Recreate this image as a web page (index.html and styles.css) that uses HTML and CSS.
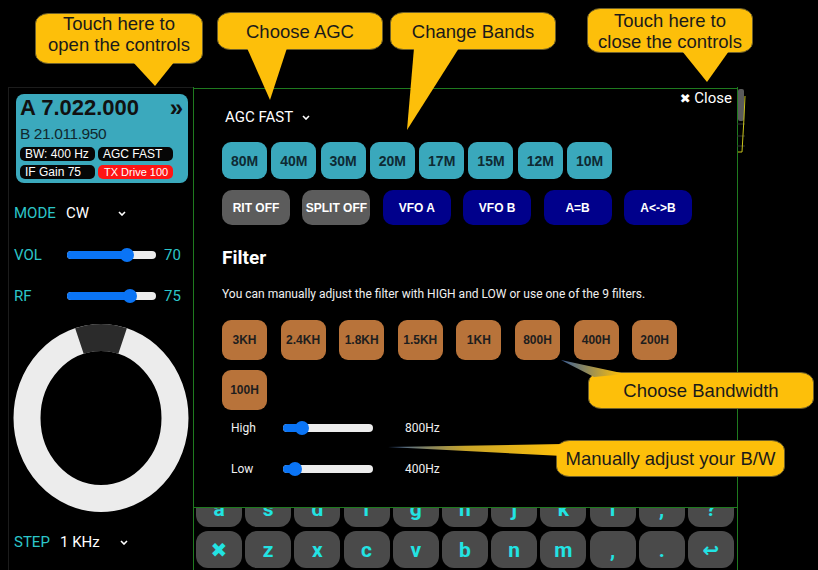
FILE: index.html
```html
<!DOCTYPE html>
<html>
<head>
<meta charset="utf-8">
<title>Radio</title>
<link rel="stylesheet" href="styles.css">
</head>
<body>
<div class="app">
  <aside class="sidebar">
    <div class="vfo">
      <div class="vfo-main"><span>A 7.022.000</span><span class="vfo-more">»</span></div>
      <div class="vfo-b">B 21.011.950</div>
      <div class="pills">
        <span class="pill">BW: 400 Hz</span>
        <span class="pill">AGC FAST</span>
        <span class="pill">IF Gain 75</span>
        <span class="pill pill-red">TX Drive 100</span>
      </div>
    </div>
    <div class="ctl-row mode-row">
      <span class="ctl-label">MODE</span>
      <span class="ctl-value">CW</span>
      <svg class="chev" width="8" height="5" viewBox="0 0 8 5"><path d="M1 1l3 3 3-3" fill="none" stroke="#fff" stroke-width="1.6"/></svg>
    </div>
    <div class="ctl-row vol-row">
      <span class="ctl-label wide">VOL</span>
      <div class="slider side-slider">
        <div class="track"></div>
        <div class="fill" style="width:59.5px"></div>
        <div class="thumb" style="left:52.5px"></div>
      </div>
      <span class="ctl-num">70</span>
    </div>
    <div class="ctl-row rf-row">
      <span class="ctl-label wide">RF</span>
      <div class="slider side-slider">
        <div class="track"></div>
        <div class="fill" style="width:63px"></div>
        <div class="thumb" style="left:56px"></div>
      </div>
      <span class="ctl-num">75</span>
    </div>
    <svg class="dial" width="176" height="190" viewBox="0 0 176 190">
      <ellipse cx="88" cy="95" rx="74" ry="80.5" fill="none" stroke="#ececec" stroke-width="27"/>
      <path d="M66.4 18 A74 80.5 0 0 1 109.6 18" fill="none" stroke="#2b2b2b" stroke-width="27"/>
    </svg>
    <div class="ctl-row step-row">
      <span class="ctl-label step">STEP</span>
      <span class="ctl-value stepv">1 KHz</span>
      <svg class="chev" width="8" height="5" viewBox="0 0 8 5"><path d="M1 1l3 3 3-3" fill="none" stroke="#fff" stroke-width="1.6"/></svg>
    </div>
  </aside>
  <main class="main">
    <div class="keyboard">
      <div class="kb-row">
        <span class="key">a</span><span class="key">s</span><span class="key">d</span><span class="key">f</span><span class="key">g</span><span class="key">h</span><span class="key">j</span><span class="key">k</span><span class="key">l</span><span class="key">,</span><span class="key">?</span>
      </div>
      <div class="kb-row">
        <span class="key key-sym">✖</span><span class="key">z</span><span class="key">x</span><span class="key">c</span><span class="key">v</span><span class="key">b</span><span class="key">n</span><span class="key">m</span><span class="key">,</span><span class="key">.</span><span class="key key-sym">↩</span>
      </div>
    </div>
  </main>
</div>

<section class="panel">
  <div class="panel-close"><span class="x">✖</span> Close</div>
  <div class="agc">AGC FAST <svg width="8" height="5" viewBox="0 0 8 5"><path d="M1 1l3 3 3-3" fill="none" stroke="#fff" stroke-width="1.6"/></svg></div>
  <div class="bands">
    <span class="band">80M</span><span class="band">40M</span><span class="band">30M</span><span class="band">20M</span><span class="band">17M</span><span class="band">15M</span><span class="band">12M</span><span class="band">10M</span>
  </div>
  <div class="vfo-btns">
    <span class="vbtn grey">RIT OFF</span>
    <span class="vbtn grey">SPLIT OFF</span>
    <span class="vbtn navy">VFO A</span>
    <span class="vbtn navy">VFO B</span>
    <span class="vbtn navy">A=B</span>
    <span class="vbtn navy">A&lt;-&gt;B</span>
  </div>
  <h2 class="filter-title">Filter</h2>
  <p class="filter-desc">You can manually adjust the filter with HIGH and LOW or use one of the 9 filters.</p>
  <div class="filters">
    <span class="fbtn">3KH</span><span class="fbtn">2.4KH</span><span class="fbtn">1.8KH</span><span class="fbtn">1.5KH</span><span class="fbtn">1KH</span><span class="fbtn">800H</span><span class="fbtn">400H</span><span class="fbtn">200H</span><span class="fbtn">100H</span>
  </div>
  <div class="bw-row high-row">
    <span class="bw-label">High</span>
    <div class="slider bw-slider">
      <div class="track"></div>
      <div class="fill" style="width:19px"></div>
      <div class="thumb" style="left:12px"></div>
    </div>
    <span class="bw-val">800Hz</span>
  </div>
  <div class="bw-row low-row">
    <span class="bw-label">Low</span>
    <div class="slider bw-slider">
      <div class="track"></div>
      <div class="fill" style="width:12px"></div>
      <div class="thumb" style="left:5px"></div>
    </div>
    <span class="bw-val">400Hz</span>
  </div>
</section>

<svg class="scope-edge" width="10" height="66" viewBox="0 0 10 66">
  <rect x="1" y="1" width="6" height="32" rx="2" fill="#5a5a5a"/>
  <line x1="0" y1="36" x2="8" y2="36" stroke="#333" stroke-width="1"/>
  <line x1="0" y1="48" x2="8" y2="48" stroke="#333" stroke-width="1"/>
  <line x1="0" y1="58" x2="8" y2="58" stroke="#333" stroke-width="1"/>
  <polyline points="8,8 7,30 5,64 1,64" fill="none" stroke="#c9c41c" stroke-width="1"/>
</svg>

<svg class="callout-shapes" width="818" height="570" viewBox="0 0 818 570">
  <defs>
    <linearGradient id="g6" x1="388" y1="0" x2="560" y2="0" gradientUnits="userSpaceOnUse">
      <stop offset="0" stop-color="#3a5f9a"/>
      <stop offset="0.45" stop-color="#c9a52a"/>
      <stop offset="1" stop-color="#fdbf0a"/>
    </linearGradient>
    <linearGradient id="g5" x1="561" y1="0" x2="620" y2="0" gradientUnits="userSpaceOnUse">
      <stop offset="0" stop-color="#3a5f9a"/>
      <stop offset="1" stop-color="#fdbf0a"/>
    </linearGradient>
  </defs>
  <g fill="#fdbf0a" stroke="#6d5f2a" stroke-width="1">
    <rect x="35.5" y="13.5" width="167" height="50" rx="13" ry="10"/>
    <rect x="217.5" y="12.5" width="165" height="37" rx="13" ry="10"/>
    <rect x="390.5" y="12.5" width="165" height="37" rx="13" ry="10"/>
    <rect x="587.5" y="8.5" width="165" height="44" rx="13" ry="10"/>
    <rect x="588.5" y="372.5" width="225" height="36" rx="13" ry="10"/>
    <rect x="556.5" y="440.5" width="228" height="36" rx="13" ry="10"/>
  </g>
  <g fill="#fdbf0a">
    <path d="M132 61 L155 86 L175 61 Z"/>
    <path d="M247 48 L270 100 L287 48 Z"/>
    <path d="M414 48 L407 130 L459 48 Z"/>
    <path d="M682 51 L707 82 L729 51 Z"/>
  </g>
  <path d="M594 377 L561 360 L626 374 Z" fill="url(#g5)"/>
  <path d="M563 444 L388 447 L563 456 Z" fill="url(#g6)"/>
</svg>

<div class="callout co1">Touch here to<br>open the controls</div>
<div class="callout co2">Choose AGC</div>
<div class="callout co3">Change Bands</div>
<div class="callout co4">Touch here to<br>close the controls</div>
<div class="callout co5">Choose Bandwidth</div>
<div class="callout co6">Manually adjust your B/W</div>
</body>
</html>
```

FILE: styles.css
```css
* {
  box-sizing: border-box;
  margin: 0;
  padding: 0;
}

html,
body {
  background: #000;
}

body {
  width: 818px;
  height: 570px;
  overflow: hidden;
  position: relative;
  font-family: Roboto, "Liberation Sans", sans-serif;
  color: #fff;
}

.app {
  display: flex;
  height: 570px;
  padding-top: 87px;
}

/* ---------- sidebar ---------- */
.sidebar {
  width: 185px;
  margin-left: 8px;
  border-left: 1px solid #1c1c1c;
  border-top: 1px solid #1c1c1c;
  padding: 6px 0 0 5px;
  display: flex;
  flex-direction: column;
}

.vfo {
  margin-left: 2px;
  width: 172px;
  height: 89px;
  background: #3ba9bd;
  border-radius: 8px;
  padding: 2px 5px 0 4px;
  color: #111;
  font-family: "Liberation Sans", Arial, sans-serif;
}

.vfo-main {
  display: flex;
  justify-content: space-between;
  align-items: center;
  height: 24px;
  font-size: 22px;
  font-weight: bold;
  line-height: 24px;
}

.vfo-more {
  font-size: 24px;
}

.vfo-b {
  margin-top: 6px;
  font-size: 15.5px;
  letter-spacing: -0.4px;
  line-height: 16px;
  color: #10282e;
}

.pills {
  margin-top: 5px;
  display: grid;
  grid-template-columns: 75px 75px;
  column-gap: 3px;
  row-gap: 4px;
}

.pill {
  height: 14px;
  border-radius: 5px;
  background: #060606;
  color: #fff;
  font-size: 12px;
  line-height: 14px;
  padding-left: 5px;
  white-space: nowrap;
  overflow: hidden;
}

.pill-red {
  background: #ff1414;
  padding-left: 6px;
  font-size: 11px;
}

.ctl-row {
  display: flex;
  align-items: center;
  height: 20px;
  font-size: 15px;
  line-height: 20px;
}

.ctl-label {
  width: 52px;
  color: #2cc6c9;
}

.ctl-label.wide {
  width: 53px;
}

.ctl-label.step {
  width: 46px;
}

.ctl-value {
  width: 52px;
  color: #fff;
}

.ctl-value.stepv {
  width: 60px;
}

.chev {
  display: block;
}

.mode-row {
  margin-top: 20px;
}

.vol-row {
  margin-top: 22px;
}

.rf-row {
  margin-top: 21px;
}

.ctl-num {
  margin-left: 8px;
  color: #2cc6c9;
}

.slider {
  position: relative;
  height: 14px;
}

.slider .track {
  position: absolute;
  left: 0;
  right: 0;
  top: 3px;
  height: 8px;
  border-radius: 4px;
  background: #ececec;
}

.slider .fill {
  position: absolute;
  left: 0;
  top: 3px;
  height: 8px;
  border-radius: 4px;
  background: #0a74f5;
}

.slider .thumb {
  position: absolute;
  top: 0;
  width: 14px;
  height: 14px;
  border-radius: 50%;
  background: #0a74f5;
}

.side-slider {
  width: 89px;
}

.dial {
  display: block;
  margin-top: 17px;
  margin-left: -1px;
}

.step-row {
  margin-top: 19px;
}

/* ---------- main / keyboard ---------- */
.main {
  width: 545px;
  border-left: 1px solid #1f7a1f;
  border-right: 1px solid #1f7a1f;
  display: flex;
  flex-direction: column;
  justify-content: flex-end;
  padding: 0 0 2px 2px;
}

.kb-row {
  display: flex;
  gap: 3.2px;
  margin-top: 4px;
}

.key {
  width: 46px;
  height: 37px;
  background: #4a4a4a;
  border-radius: 12px;
  color: #22e3e3;
  font-family: Roboto, sans-serif;
  font-weight: bold;
  font-size: 21px;
  display: flex;
  align-items: center;
  justify-content: center;
}

.key-sym {
  font-family: "DejaVu Sans", sans-serif;
  font-size: 20px;
}

/* ---------- controls panel ---------- */
.panel {
  position: absolute;
  left: 193px;
  top: 88px;
  width: 545px;
  height: 420px;
  border: 1px solid #1f7a1f;
  background: #000;
  padding: 0 5px 0 28px;
  display: flex;
  flex-direction: column;
}

.panel-close {
  align-self: flex-end;
  font-size: 15px;
  line-height: 18px;
  height: 18px;
  color: #fff;
}

.panel-close .x {
  font-family: "DejaVu Sans", sans-serif;
  font-size: 13px;
}

.agc {
  margin: 1px 0 0 3px;
  font-size: 15px;
  line-height: 18px;
  display: flex;
  align-items: center;
  gap: 9px;
}

.bands {
  margin-top: 16px;
  display: flex;
  gap: 4.3px;
}

.band {
  width: 45px;
  height: 37px;
  border-radius: 9px;
  background: #3aa8bc;
  color: #0e2a33;
  font-family: "Liberation Sans", Arial, sans-serif;
  font-weight: bold;
  font-size: 14px;
  display: flex;
  align-items: center;
  justify-content: center;
}

.vfo-btns {
  margin-top: 11px;
  display: flex;
  gap: 12.4px;
}

.vbtn {
  width: 68px;
  height: 35px;
  border-radius: 10px;
  font-family: "Liberation Sans", Arial, sans-serif;
  font-weight: bold;
  font-size: 12px;
  color: #fff;
  display: flex;
  align-items: center;
  justify-content: center;
  white-space: nowrap;
}

.vbtn.grey {
  background: #5c5c5c;
}

.vbtn.navy {
  background: #00008b;
}

.filter-title {
  margin-top: 22px;
  font-size: 19px;
  font-weight: bold;
  line-height: 22px;
}

.filter-desc {
  margin-top: 18px;
  font-size: 12px;
  line-height: 14px;
  color: #f0f0f0;
}

.filters {
  margin-top: 19px;
  width: 460px;
  display: flex;
  flex-wrap: wrap;
  column-gap: 13.6px;
  row-gap: 10px;
}

.fbtn {
  width: 45px;
  height: 40px;
  border-radius: 9px;
  background: #b8733a;
  color: #1e1e1e;
  font-family: "Liberation Sans", Arial, sans-serif;
  font-weight: bold;
  font-size: 12px;
  display: flex;
  align-items: center;
  justify-content: center;
}

.bw-row {
  display: flex;
  align-items: center;
  height: 20px;
  margin-left: 9px;
  font-size: 12px;
  color: #f0f0f0;
}

.high-row {
  margin-top: 8px;
}

.low-row {
  margin-top: 21px;
}

.bw-label {
  width: 52px;
}

.bw-slider {
  width: 90px;
}

.bw-val {
  margin-left: 32px;
}

/* ---------- decorations / annotations ---------- */
.scope-edge {
  position: absolute;
  left: 737px;
  top: 88px;
}

.callout-shapes {
  position: absolute;
  left: 0;
  top: 0;
  pointer-events: none;
}

.callout {
  position: absolute;
  display: flex;
  align-items: center;
  justify-content: center;
  text-align: center;
  font-family: "Liberation Sans", Arial, sans-serif;
  font-size: 18.5px;
  line-height: 21px;
  color: #1a1a1a;
}

.co1 {
  left: 35px;
  top: 13px;
  width: 168px;
  height: 42px;
}

.co2 {
  left: 217px;
  top: 12px;
  width: 166px;
  height: 38px;
}

.co3 {
  left: 390px;
  top: 12px;
  width: 166px;
  height: 38px;
}

.co4 {
  left: 587px;
  top: 9.5px;
  width: 166px;
  height: 42px;
}

.co5 {
  left: 588px;
  top: 372px;
  width: 226px;
  height: 37px;
}

.co6 {
  left: 556px;
  top: 440px;
  width: 229px;
  height: 37px;
}
```
